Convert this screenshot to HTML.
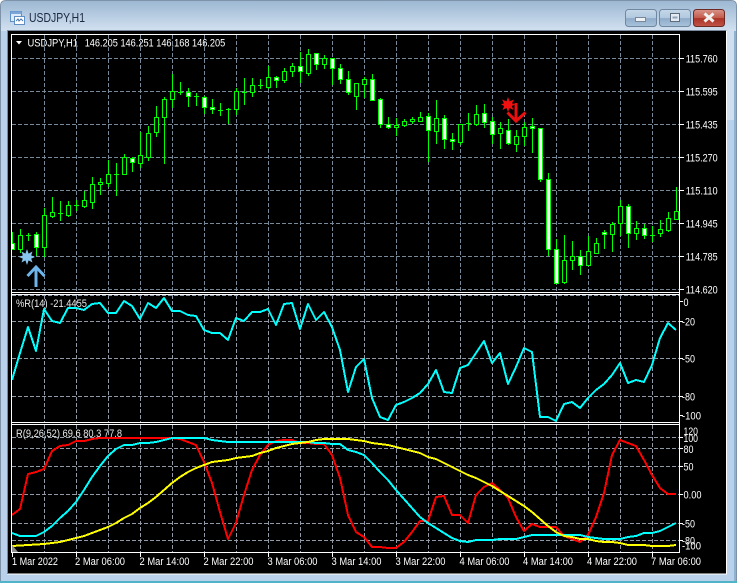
<!DOCTYPE html>
<html><head><meta charset="utf-8"><style>
html,body{margin:0;padding:0;width:737px;height:583px;overflow:hidden;background:#fff}
svg{display:block}
text{font-family:"Liberation Sans",sans-serif;font-size:11px;fill:#fff}
.t text{fill:#fff}
</style></head><body>
<svg width="737" height="583" viewBox="0 0 737 583" xmlns="http://www.w3.org/2000/svg">
<defs>
<linearGradient id="tb" x1="0" y1="0" x2="0" y2="1"><stop offset="0" stop-color="#9db8d3"/><stop offset="1" stop-color="#d2e1f0"/></linearGradient>
<linearGradient id="bt" x1="0" y1="0" x2="0" y2="1"><stop offset="0" stop-color="#c6d8e9"/><stop offset=".5" stop-color="#b0c8df"/><stop offset=".52" stop-color="#8fabc8"/><stop offset="1" stop-color="#a9c3dc"/></linearGradient>
<linearGradient id="cl" x1="0" y1="0" x2="0" y2="1"><stop offset="0" stop-color="#d9948a"/><stop offset=".5" stop-color="#c25a4b"/><stop offset=".52" stop-color="#aa3225"/><stop offset="1" stop-color="#c25549"/></linearGradient>
<clipPath id="c1"><rect x="12" y="35" width="667" height="257"/></clipPath>
<clipPath id="c2"><rect x="12" y="295" width="667" height="127"/></clipPath>
<clipPath id="c3"><rect x="12" y="425" width="667" height="127"/></clipPath>
</defs>
<!-- window -->
<path d="M1 583V6Q1 1 6 1H731Q736 1 736 6V583Z" fill="#b9d1ea"/>
<path d="M1 31V6Q1 1 6 1H731Q736 1 736 6V31Z" fill="url(#tb)"/>
<path d="M.5 583V6Q.5 .5 6 .5H731Q736.5 .5 736.5 6V583" fill="none" stroke="#7f93a8"/>
<rect x="727" y="31" width="7" height="89" fill="#cfdff0"/>
<rect x="0" y="581" width="737" height="2" fill="#4fb4c8"/>
<rect x="734" y="31" width="2" height="550" fill="#8fb3cf"/>
<!-- title icon -->
<g>
<rect x="10.5" y="11.5" width="11" height="10" fill="#dfeafa" stroke="#5f8fc4"/>
<rect x="10.5" y="11.5" width="11" height="2.5" fill="#7aa6d8"/>
<rect x="14.5" y="16.5" width="10" height="8" fill="#fff" stroke="#5f8fc4"/>
<path d="M16 21l2-2 1 2 2-2 2 2" fill="none" stroke="#4a78b0"/>
</g>
<text x="29" y="22" textLength="56" lengthAdjust="spacingAndGlyphs" style="font-size:12.5px;fill:#1c2740">USDJPY,H1</text>
<!-- buttons -->
<rect x="625.5" y="9.5" width="31" height="17" rx="3" fill="url(#bt)" stroke="#6f879f"/>
<rect x="635.5" y="17.5" width="10" height="4" fill="#eef2f6" stroke="#7a8796"/>
<rect x="659.5" y="9.5" width="31" height="17" rx="3" fill="url(#bt)" stroke="#6f879f"/>
<rect x="670.5" y="13.5" width="9" height="8" fill="#e4ebf2" stroke="#5f6b78"/>
<rect x="672.5" y="16.5" width="5" height="2" fill="#8fa3b8"/>
<rect x="693.5" y="9.5" width="31" height="17" rx="3" fill="url(#cl)" stroke="#6b2a24"/>
<path d="M704.5 13.5l9 8M713.5 13.5l-9 8" stroke="#f3f1ef" stroke-width="3" fill="none"/>
<!-- client -->
<rect x="7.5" y="30.5" width="719" height="543.5" fill="#000" stroke="#fff"/>
<path d="M7.5 574V30.5H726.5" fill="none" stroke="#79889a"/>

<!-- grid -->
<g fill="none" stroke="#778899" stroke-dasharray="4 2" clip-path="url(#c1)" shape-rendering="crispEdges">
<path d="M12 58.5H679M12 91.5H679M12 124.5H679M12 157.5H679M12 190.5H679M12 223.5H679M12 256.5H679M12 289.5H679"/>
<path d="M44.5 35V292M76.5 35V292M108.5 35V292M140.5 35V292M172.5 35V292M204.5 35V292M236.5 35V292M268.5 35V292M300.5 35V292M332.5 35V292M364.5 35V292M396.5 35V292M428.5 35V292M460.5 35V292M492.5 35V292M524.5 35V292M556.5 35V292M588.5 35V292M620.5 35V292M652.5 35V292"/>
</g>
<g fill="none" stroke="#8f9aa6" stroke-dasharray="4 2" clip-path="url(#c2)" shape-rendering="crispEdges">
<path d="M12 295.5H679M12 321.5H679M12 358.5H679M12 396.5H679"/>
<path d="M44.5 295V422M76.5 295V422M108.5 295V422M140.5 295V422M172.5 295V422M204.5 295V422M236.5 295V422M268.5 295V422M300.5 295V422M332.5 295V422M364.5 295V422M396.5 295V422M428.5 295V422M460.5 295V422M492.5 295V422M524.5 295V422M556.5 295V422M588.5 295V422M620.5 295V422M652.5 295V422"/>
</g>
<g fill="none" stroke="#8f9aa6" stroke-dasharray="4 2" clip-path="url(#c3)" shape-rendering="crispEdges">
<path d="M12 437.5H679M12 448.5H679M12 466.5H679M12 494.5H679M12 523.5H679M12 540.5H679"/>
<path d="M44.5 425V552M76.5 425V552M108.5 425V552M140.5 425V552M172.5 425V552M204.5 425V552M236.5 425V552M268.5 425V552M300.5 425V552M332.5 425V552M364.5 425V552M396.5 425V552M428.5 425V552M460.5 425V552M492.5 425V552M524.5 425V552M556.5 425V552M588.5 425V552M620.5 425V552M652.5 425V552"/>
</g>

<!-- candles -->
<g clip-path="url(#c1)" shape-rendering="crispEdges">
<path fill="none" stroke="#00ff00" d="M12.5 232V250M20.5 229V253M28.5 233V241M36.5 232V256M44.5 208V257M52.5 197V218M60.5 201V221M68.5 201V217M76.5 200V211M84.5 191V208M92.5 177V209M100.5 178V195M108.5 160V187M116.5 163V196M124.5 154V174M132.5 157V172M140.5 132V168M148.5 126V161M156.5 106V137M164.5 97V164M172.5 74V108M180.5 82V95M188.5 88V107M196.5 93V106M204.5 96V114M212.5 99V114M220.5 103V116M228.5 108V124M236.5 88V115M244.5 78V105M252.5 78V97M260.5 79V89M268.5 66V89M276.5 76V88M284.5 68V83M292.5 63V77M300.5 52V83M308.5 49V76M316.5 53V70M324.5 55V69M332.5 58V85M340.5 64V84M348.5 71V95M356.5 83V110M364.5 77V98M372.5 74V101M380.5 98V128M388.5 117V129M396.5 118V136M404.5 119V127M412.5 117V124M420.5 112V121M428.5 113V162M436.5 100V144M444.5 115V149M452.5 133V150M460.5 124V145M468.5 113V131M476.5 105V126M484.5 104V128M492.5 117V144M500.5 122V149M508.5 119V145M516.5 130V152M524.5 122V146M532.5 118V153M540.5 128V182M548.5 173V256M556.5 239V284M564.5 235V284M572.5 241V270M580.5 250V275M588.5 236V266M596.5 238V253M604.5 230V249M612.5 222V252M620.5 200V236M628.5 204V248M636.5 221V240M644.5 224V239M652.5 226V242M660.5 220V237M668.5 212V232M676.5 187V220"/>
<path fill="none" stroke="#00ff00" d="M26 235.5h5M58 213.5h5M74 205.5h5M114 174.5h5M178 92.5h5M194 96.5h5M218 110.5h5M226 109.5h5M242 92.5h5M258 85.5h5M466 123.5h5M650 235.5h5"/>
<path fill="#000" stroke="#00ff00" d="M18.5 235.5h4v14h-4zM42.5 215.5h4v32h-4zM50.5 212.5h4v4h-4zM66.5 205.5h4v10h-4zM82.5 200.5h4v6h-4zM90.5 184.5h4v18h-4zM98.5 182.5h4v2h-4zM106.5 174.5h4v9h-4zM122.5 157.5h4v17h-4zM138.5 155.5h4v8h-4zM146.5 133.5h4v24h-4zM154.5 117.5h4v15h-4zM162.5 99.5h4v18h-4zM170.5 91.5h4v8h-4zM234.5 91.5h4v18h-4zM250.5 85.5h4v7h-4zM266.5 77.5h4v10h-4zM282.5 71.5h4v9h-4zM290.5 66.5h4v5h-4zM306.5 54.5h4v19h-4zM322.5 58.5h4v6h-4zM354.5 83.5h4v13h-4zM362.5 79.5h4v5h-4zM394.5 125.5h4v2h-4zM402.5 121.5h4v4h-4zM410.5 119.5h4v2h-4zM418.5 117.5h4v4h-4zM434.5 118.5h4v13h-4zM458.5 124.5h4v18h-4zM474.5 114.5h4v10h-4zM498.5 128.5h4v5h-4zM514.5 136.5h4v8h-4zM522.5 127.5h4v9h-4zM562.5 260.5h4v22h-4zM570.5 256.5h4v4h-4zM586.5 251.5h4v14h-4zM594.5 243.5h4v10h-4zM610.5 224.5h4v10h-4zM618.5 206.5h4v17h-4zM634.5 228.5h4v5h-4zM658.5 229.5h4v4h-4zM666.5 218.5h4v12h-4zM674.5 211.5h4v8h-4z"/>
<path fill="#fff" stroke="#00ff00" d="M10.5 243.5h4v6h-4zM34.5 234.5h4v13h-4zM130.5 158.5h4v4h-4zM186.5 92.5h4v4h-4zM202.5 97.5h4v10h-4zM210.5 107.5h4v2h-4zM274.5 77.5h4v3h-4zM298.5 66.5h4v5h-4zM314.5 53.5h4v11h-4zM330.5 58.5h4v10h-4zM338.5 68.5h4v11h-4zM346.5 79.5h4v13h-4zM370.5 79.5h4v21h-4zM378.5 99.5h4v25h-4zM386.5 124.5h4v3h-4zM426.5 116.5h4v14h-4zM442.5 118.5h4v21h-4zM450.5 139.5h4v2h-4zM482.5 113.5h4v9h-4zM490.5 121.5h4v13h-4zM506.5 130.5h4v13h-4zM530.5 126.5h4v2h-4zM538.5 128.5h4v51h-4zM546.5 179.5h4v70h-4zM554.5 249.5h4v34h-4zM578.5 256.5h4v9h-4zM602.5 232.5h4v2h-4zM626.5 206.5h4v27h-4zM642.5 228.5h4v7h-4z"/>
</g>

<!-- arrows and stars -->
<polygon points="27,249 28.6,253.6 32.5,251.5 31.2,255.4 35,257 31.2,258.6 32.5,262.5 28.6,260.4 27,265 25.4,260.4 21.5,262.5 22.8,258.6 19,257 22.8,255.4 21.5,251.5 25.4,253.6" fill="#87c4ee"/>
<path d="M36 287V267M27.5 276L36 267L44.5 276" fill="none" stroke="#6db5ea" stroke-width="3"/>
<polygon points="508,97 509.5,101.4 514,99.5 512,103.2 515,104.5 511.8,106 513.5,110 509.5,108 508,112 506.5,108 502.5,110 504.2,106 501,104.5 504,103.2 502,99.5 506.5,101.4" fill="#f01010"/>
<path d="M516 103V120M507.5 112.5L516 121L525.5 112.5" fill="none" stroke="#e81010" stroke-width="3"/>

<!-- WPR -->
<polyline clip-path="url(#c2)" fill="none" stroke="#00ffff" stroke-width="2" stroke-linejoin="round" shape-rendering="crispEdges" points="12,380 20,353 28,327 36,351 44,309 52,321 60,323 68,308 76,308 84,310 92,304 100,303 108,313 116,313 124,301 132,306 140,319 148,303 156,308 164,298 172,311 180,311 188,315 196,316 204,330 212,333 220,333 228,340 236,318 244,321 252,312 260,312 268,309 276,325 284,304 292,303 300,329 308,304 316,320 324,312 332,327 340,350 348,392 356,367 364,359 372,398 380,417 388,420 396,405 404,402 412,398 420,393 428,384 436,370 444,392 452,393 460,368 468,365 476,353 484,341 492,363 500,353 508,384 516,367 524,348 532,352 540,417 548,417 556,421 564,404 572,402 580,408 588,398 596,390 604,384 612,375 620,363 628,383 636,380 644,382 652,365 660,338 668,323 676,330"/>

<!-- pane 3 -->
<g clip-path="url(#c3)" fill="none" stroke-width="2" stroke-linejoin="round" shape-rendering="crispEdges">
<polyline stroke="#ff0000" points="12,515 20,509 28,474 36,472 44,469 52,451 60,446 68,445 76,441 84,441 92,439 100,438 108,438 116,438 124,438 132,438 140,438 148,438 156,438 164,438 172,438 180,439 188,442 196,445 204,462 212,483 220,512 228,539 236,523 244,495 252,470 260,455 268,445 276,441 284,440 292,440 300,443 308,443 316,444 324,444 332,455 340,478 348,515 356,532 364,537 372,547 380,547 388,548 396,548 404,542 412,532 420,521 428,521 436,497 444,496 452,515 460,515 468,523 476,495 484,487 492,483 500,490 508,498 516,517 524,531 532,524 540,527 548,527 556,527 564,536 572,539 580,542 588,535 596,517 604,493 612,455 620,440 628,443 636,446 644,460 652,475 660,488 668,494 676,494"/>
<polyline stroke="#00ffff" points="12,533 20,536 28,536 36,536 44,532 52,526 60,518 68,511 76,502 84,490 92,477 100,466 108,456 116,449 124,445 132,445 140,443 148,443 156,442 164,440 172,438 180,438 188,438 196,438 204,438 212,440 220,441 228,442 236,442 244,442 252,442 260,442 268,442 276,442 284,442 292,442 300,442 308,442 316,443 324,443 332,444 340,444 348,450 356,452 364,455 372,463 380,472 388,480 396,490 404,499 412,508 420,517 428,523 436,528 444,533 452,538 460,541 468,542 476,540 484,540 492,540 500,539 508,539 516,539 524,537 532,535 540,535 548,535 556,535 564,535 572,535 580,535 588,537 596,538 604,539 612,539 620,539 628,537 636,536 644,533 652,533 660,531 668,527 676,523"/>
<polyline stroke="#ffff00" points="12,546 28,545 44,544 60,542 76,538 84,536 92,533 100,530 108,527 116,523 124,518 132,514 140,508 148,503 156,497 164,490 172,483 180,477 188,472 196,468 204,465 212,462 220,461 228,460 236,458 244,457 252,456 260,453 268,451 276,448 284,446 292,444 300,443 308,442 316,440 324,439 332,439 340,439 348,439 356,440 364,441 372,443 380,444 388,445 396,447 404,449 412,451 420,453 428,457 436,459 444,463 452,467 460,471 468,475 476,478 484,482 492,486 500,491 508,496 516,501 524,506 532,512 540,519 548,526 556,532 564,536 572,537 580,539 588,539 596,541 604,542 612,542 620,543 628,545 636,545 644,545 652,546 660,546 668,546 676,545"/>
</g>
<polygon points="12,545 18,552 12,552" fill="#8d8d8d"/>

<!-- pane borders -->
<g fill="none" stroke="#fff" shape-rendering="crispEdges">
<path d="M11.5 34.5H679.5V552.5H11.5Z"/>
<path d="M12 292.5H679M12 294.5H679M12 422.5H679M12 424.5H679"/>
<path d="M680 58.5h4M680 91.5h4M680 124.5h4M680 157.5h4M680 190.5h4M680 223.5h4M680 256.5h4M680 289.5h4M680 301.5h3M680 321.5h3M680 358.5h3M680 396.5h3M680 415.5h3M680 437.5h3M680 448.5h3M680 466.5h3M680 494.5h3M680 523.5h3M680 540.5h3"/>
<path d="M12.5 553v4M76.5 553v4M140.5 553v4M204.5 553v4M268.5 553v4M332.5 553v4M396.5 553v4M460.5 553v4M524.5 553v4M588.5 553v4M652.5 553v4"/>
</g>

<!-- header -->
<polygon points="16,41 22,41 19,44.5" fill="#fff"/>
<text x="27.5" y="46.5" textLength="50.5" lengthAdjust="spacingAndGlyphs">USDJPY,H1</text>
<text x="84.7" y="46.5" textLength="140.5" lengthAdjust="spacingAndGlyphs">146.205 146.251 146.168 146.205</text>
<text x="16" y="307" textLength="71" lengthAdjust="spacingAndGlyphs" style="fill:#e8e8e8">%R(14) -21.4455</text>
<text x="16" y="437" textLength="106" lengthAdjust="spacingAndGlyphs" style="fill:#e8e8e8">R(9,26,52) 69.6 80.3 77.8</text>

<!-- price scale -->
<text x="685.7" y="62.5" textLength="32" lengthAdjust="spacingAndGlyphs">115.760</text>
<text x="685.7" y="95.5" textLength="32" lengthAdjust="spacingAndGlyphs">115.595</text>
<text x="685.7" y="128.5" textLength="32" lengthAdjust="spacingAndGlyphs">115.435</text>
<text x="685.7" y="161.5" textLength="32" lengthAdjust="spacingAndGlyphs">115.270</text>
<text x="685.7" y="194.5" textLength="32" lengthAdjust="spacingAndGlyphs">115.110</text>
<text x="685.7" y="227.5" textLength="32" lengthAdjust="spacingAndGlyphs">114.945</text>
<text x="685.7" y="260.5" textLength="32" lengthAdjust="spacingAndGlyphs">114.785</text>
<text x="685.7" y="293.5" textLength="32" lengthAdjust="spacingAndGlyphs">114.620</text>

<text x="683.5" y="306" textLength="5" lengthAdjust="spacingAndGlyphs">0</text>
<text x="682" y="325.5" textLength="13" lengthAdjust="spacingAndGlyphs">-20</text>
<text x="682" y="362.5" textLength="13" lengthAdjust="spacingAndGlyphs">-50</text>
<text x="682" y="400.5" textLength="13" lengthAdjust="spacingAndGlyphs">-80</text>
<text x="682" y="419.5" textLength="19" lengthAdjust="spacingAndGlyphs">-100</text>

<text x="683.5" y="435" textLength="14.5" lengthAdjust="spacingAndGlyphs">120</text>
<text x="683.5" y="442" textLength="14.5" lengthAdjust="spacingAndGlyphs">100</text>
<text x="683.5" y="453" textLength="10" lengthAdjust="spacingAndGlyphs">80</text>
<text x="683.5" y="470.5" textLength="10" lengthAdjust="spacingAndGlyphs">50</text>
<text x="683.5" y="498.5" textLength="18" lengthAdjust="spacingAndGlyphs">0.00</text>
<text x="682" y="527.5" textLength="13" lengthAdjust="spacingAndGlyphs">-50</text>
<text x="682" y="544.5" textLength="13" lengthAdjust="spacingAndGlyphs">-80</text>
<text x="682" y="549.5" textLength="19" lengthAdjust="spacingAndGlyphs">-100</text>

<!-- time scale -->
<text x="12" y="565" textLength="46" lengthAdjust="spacingAndGlyphs">1 Mar 2022</text>
<text x="75" y="565" textLength="50" lengthAdjust="spacingAndGlyphs">2 Mar 06:00</text>
<text x="139.5" y="565" textLength="50" lengthAdjust="spacingAndGlyphs">2 Mar 14:00</text>
<text x="203.5" y="565" textLength="50" lengthAdjust="spacingAndGlyphs">2 Mar 22:00</text>
<text x="267.5" y="565" textLength="50" lengthAdjust="spacingAndGlyphs">3 Mar 06:00</text>
<text x="331.5" y="565" textLength="50" lengthAdjust="spacingAndGlyphs">3 Mar 14:00</text>
<text x="395.5" y="565" textLength="50" lengthAdjust="spacingAndGlyphs">3 Mar 22:00</text>
<text x="459.5" y="565" textLength="50" lengthAdjust="spacingAndGlyphs">4 Mar 06:00</text>
<text x="523" y="565" textLength="50" lengthAdjust="spacingAndGlyphs">4 Mar 14:00</text>
<text x="587" y="565" textLength="50" lengthAdjust="spacingAndGlyphs">4 Mar 22:00</text>
<text x="651" y="565" textLength="50" lengthAdjust="spacingAndGlyphs">7 Mar 06:00</text>
</svg>
</body></html>
